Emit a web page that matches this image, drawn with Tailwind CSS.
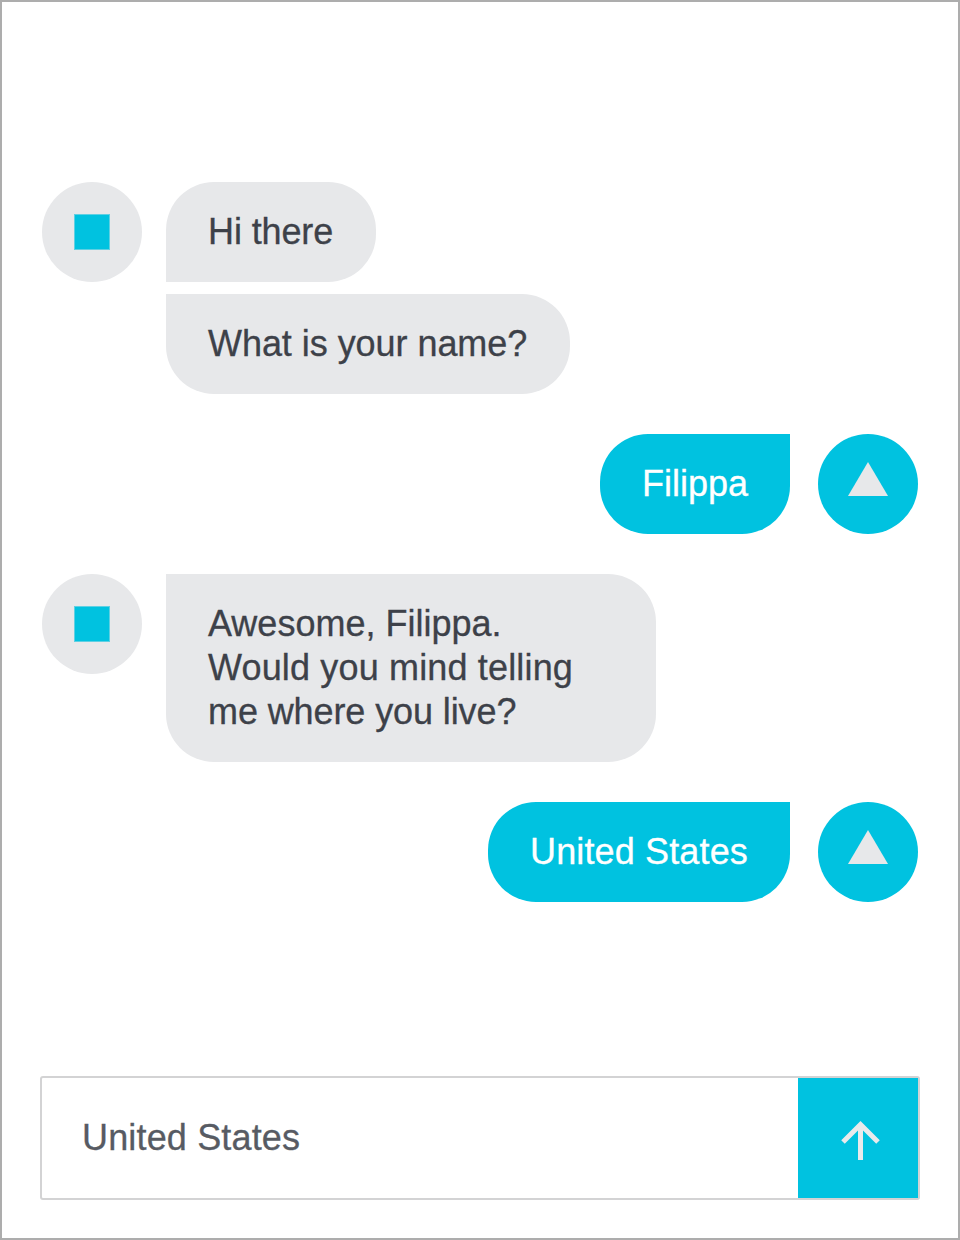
<!DOCTYPE html>
<html lang="en">
<head>
<meta charset="utf-8">
<title>Chat</title>
<script src="https://cdn.jsdelivr.net/npm/@tailwindcss/browser@4"></script>
</head>
<body class="bg-white">
<main class="flex h-[1240px] w-[960px] flex-col border-2 border-[#adadad] bg-white px-[38px] pt-[180px] pb-[38px] font-['Liberation_Sans',Arial,sans-serif] text-[36px] leading-[44px] text-[#3d4149] [-webkit-text-stroke:0.3px_currentColor]">
  <section class="flex flex-1 flex-col gap-10 px-0.5">
    <div class="flex items-start gap-6">
      <div class="flex size-[100px] shrink-0 items-center justify-center rounded-full bg-[#e7e8ea]">
        <div class="size-9 border border-[#5fd0e3] bg-[#00c2e0]"></div>
      </div>
      <div class="flex flex-col items-start gap-3">
        <p class="w-[210px] rounded-[48px] rounded-bl-none bg-[#e7e8ea] px-[42px] py-7 tracking-[-0.12px] whitespace-nowrap">Hi there</p>
        <p class="w-[404px] rounded-[48px] rounded-tl-none bg-[#e7e8ea] px-[42px] py-7 tracking-[-0.05px] whitespace-nowrap">What is your name?</p>
      </div>
    </div>
    <div class="flex items-start justify-end gap-7">
      <p class="rounded-[48px] rounded-tr-none bg-[#00c2e0] px-[42px] py-7 whitespace-nowrap text-white">Filippa</p>
      <div class="flex size-[100px] shrink-0 justify-center rounded-full bg-[#00c2e0] pt-7">
        <svg class="h-[34px] w-10" viewBox="0 0 40 34"><path d="M20 0L40 34H0Z" fill="#e7e8ea"/></svg>
      </div>
    </div>
    <div class="flex items-start gap-6">
      <div class="flex size-[100px] shrink-0 items-center justify-center rounded-full bg-[#e7e8ea]">
        <div class="size-9 border border-[#5fd0e3] bg-[#00c2e0]"></div>
      </div>
      <p class="w-[490px] rounded-[48px] rounded-tl-none bg-[#e7e8ea] px-[42px] py-7 whitespace-nowrap">Awesome, Filippa.<br><span class="tracking-[0.16px]">Would you mind telling</span><br><span class="tracking-[-0.1px]">me where you live?</span></p>
    </div>
    <div class="flex items-start justify-end gap-7">
      <p class="w-[302px] rounded-[48px] rounded-tr-none bg-[#00c2e0] px-[42px] py-7 tracking-[0.14px] whitespace-nowrap text-white">United States</p>
      <div class="flex size-[100px] shrink-0 justify-center rounded-full bg-[#00c2e0] pt-7">
        <svg class="h-[34px] w-10" viewBox="0 0 40 34"><path d="M20 0L40 34H0Z" fill="#e7e8ea"/></svg>
      </div>
    </div>
  </section>
  <form class="flex h-[124px] items-stretch rounded-[3px] border-2 border-[#d3d3d4]">
    <div class="flex flex-1 items-center pl-10 tracking-[0.16px] text-[#575b63]">United States</div>
    <button type="button" aria-label="Send" class="flex w-[120px] items-center justify-center bg-[#00c2e0]">
      <svg class="size-[60px]" viewBox="0 0 60 60" fill="none" stroke="#e9eaec" stroke-width="5"><path d="M32.500 52V17"/><path d="M15 34L32.500 16.500L50 34"/></svg>
    </button>
  </form>
</main>
</body>
</html>
